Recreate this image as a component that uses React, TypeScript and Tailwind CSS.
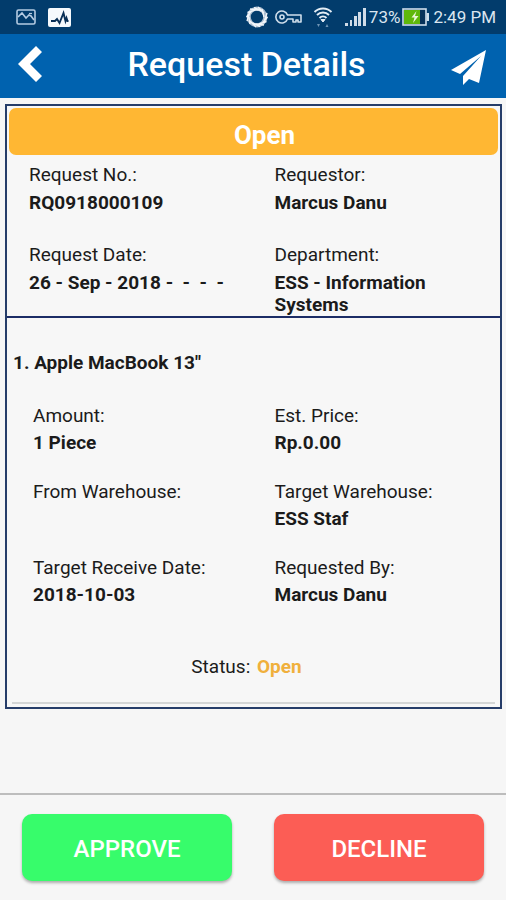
import React from "react";

type FieldProps = { label: string; value?: string; gap: string; pad: string };

function Field({ label, value, gap, pad }: FieldProps) {
  return (
    <div className={`flex flex-col ${gap} ${pad}`}>
      <dt>{label}</dt>
      <dd className="min-h-[22px] whitespace-pre-wrap font-bold">{value}</dd>
    </div>
  );
}

function StatusBar() {
  return (
    <div className="flex h-[34px] items-center justify-between bg-[#023c6c] pl-4 pr-[10px] text-[17px] leading-[22px] text-[#dbe6f0]">
      <div className="flex items-center gap-3">
        <svg width="20" height="16" viewBox="0 0 20 16" fill="none" stroke="#b5cbe2" aria-hidden="true">
          <rect x="1" y="1" width="18" height="14" rx="1.5" strokeWidth="1.6" />
          <path d="M2 8 6 4l4 5 3-3 2 1 3 4" strokeWidth="1.6" />
          <path d="M13 4.5h3" strokeWidth="1.2" />
        </svg>
        <svg width="23" height="19" viewBox="0 0 23 19" aria-hidden="true">
          <rect width="23" height="19" rx="2" fill="#f5f9fd" />
          <path d="M3 13h4l2-2 2.500 4 4-10 2 8 1-3 1 3h1" fill="none" stroke="#082f57" strokeWidth="1.9" />
        </svg>
      </div>
      <div className="flex items-center">
        <svg width="24" height="22" viewBox="0 0 24 22" fill="none" aria-hidden="true">
          <circle cx="12" cy="11" r="8.3" stroke="#a9bccf" strokeWidth="4.200" />
          <g stroke="#f2f6fa" strokeWidth="1.400">
            <path d="M9 1.500 16.500 5M13 1l6 6M5 3l8.500 1M2.500 6.500 10 4M1.500 11 6 5.500M2 15l2.500-7.500" />
            <path d="M15 20.500 7.500 17M11 21l-6-6M19 19l-8.500-1M21.500 15.500 14 18M22.500 11 18 16.500M22 7l-2.500 7.500M17 3l2 8M5 18l-1-7" />
          </g>
        </svg>
        <svg className="ml-[6px]" width="28" height="16" viewBox="0 0 28 16" fill="none" stroke="#cfdeeb" strokeWidth="1.6" aria-hidden="true">
          <path d="M12.500 6a6 6 0 1 0 0 4H18v3h3v-2h2v2h3V6z" strokeLinejoin="round" />
          <circle cx="7" cy="8" r="2" />
        </svg>
        <svg className="ml-[10px]" width="20" height="22" viewBox="0 0 20 22" fill="none" stroke="#e4edf5" strokeWidth="1.9" aria-hidden="true">
          <path d="M1.500 6a12 12 0 0 1 17 0M4 9a8.500 8.500 0 0 1 12 0M6.500 12a5 5 0 0 1 7 0" />
          <path d="m8 13.500 2 2.500 2-2.500z" fill="#e4edf5" strokeWidth="1" />
          <path d="m4 18 1.500 3L7 18zM12.500 21l1.500-3 1.500 3z" fill="#6f94b4" stroke="none" />
        </svg>
        <svg className="ml-3" width="22" height="20" viewBox="0 0 22 20" fill="#d0dce8" aria-hidden="true">
          <path d="M0 16h3v3H0zM5 13h2v6H5zM9 9h3v10H9zM13 5h3v14h-3zM18 1h3v18h-3z" />
        </svg>
        <span className="ml-[2px]">73%</span>
        <svg className="ml-[2px]" width="27" height="18" viewBox="0 0 27 18" aria-hidden="true">
          <rect x="1" y="1" width="23" height="16" fill="#073259" stroke="#cfdeeb" strokeWidth="1.600" />
          <path d="M24.500 5H27v8h-2.500z" fill="#cfdeeb" />
          <rect x="2" y="2" width="16" height="14" fill="#5fb80a" />
          <path d="m14.500 3-5 6.500h3L11 15l5.500-7H13z" fill="#e8f5d5" />
        </svg>
        <span className="ml-1">2:49 PM</span>
      </div>
    </div>
  );
}

export default function App() {
  return (
    <div className="flex min-h-screen flex-col bg-[#f6f6f6] font-[Roboto,sans-serif] text-[19px] leading-[22px] text-[#1b1b1b]">
      <StatusBar />
      <header className="flex h-16 items-center justify-between bg-[#0062af] pl-[17px] pr-5 text-white">
        <button type="button" aria-label="Back" className="pb-1">
          <svg width="26" height="38" viewBox="0 0 26 38" aria-hidden="true">
            <path d="M19 1 25 7 13 19 25 31 19 37 1 19z" fill="#fff" />
          </svg>
        </button>
        <h1 className="pb-1 text-[34px] font-medium leading-10">Request Details</h1>
        <button type="button" aria-label="Send" className="pt-1">
          <svg width="36" height="36" viewBox="0 0 36 36" fill="#fff" aria-hidden="true">
            <path d="M36 0 1 20l9 4L31 6 13 26v9l6-6 10 4z" />
          </svg>
        </button>
      </header>

      <main className="flex-1 pl-[5px] pr-1 pt-[6px]">
        <article className="border-2 border-[#263d69] bg-[#f7f7f7]">
          <section className="border-b-2 border-[#1c2d66]">
            <div className="px-[2px] pt-[2px]">
              <h2 className="rounded-[7px] bg-[#ffb733] pb-1 pl-[22px] pt-[11px] text-center text-[26px] font-bold leading-8 text-white">
                Open
              </h2>
            </div>
            <dl className="grid grid-cols-2 gap-y-[30px] pt-[9px]">
              <Field gap="gap-[6px]" pad="px-[22px]" label="Request No.:" value="RQ0918000109" />
              <Field gap="gap-[6px]" pad="px-[21px]" label="Requestor:" value="Marcus Danu" />
              <Field gap="gap-[6px]" pad="px-[22px]" label="Request Date:" value="26 - Sep - 2018 -  -  -  -" />
              <Field gap="gap-[6px]" pad="px-[21px]" label="Department:" value="ESS - Information Systems" />
            </dl>
          </section>

          <section className="pb-[3px] pt-[34px]">
            <h3 className="pl-[6px] font-bold">1. Apple MacBook 13"</h3>
            <dl className="grid grid-cols-2 gap-y-[27px] pt-[31px]">
              <Field gap="gap-[5px]" pad="pl-[26px]" label="Amount:" value="1 Piece" />
              <Field gap="gap-[5px]" pad="px-[21px]" label="Est. Price:" value="Rp.0.00" />
              <Field gap="gap-[5px]" pad="pl-[26px]" label="From Warehouse:" />
              <Field gap="gap-[5px]" pad="px-[21px]" label="Target Warehouse:" value="ESS Staf" />
              <Field gap="gap-[5px]" pad="pl-[26px]" label="Target Receive Date:" value="2018-10-03" />
              <Field gap="gap-[5px]" pad="px-[21px]" label="Requested By:" value="Marcus Danu" />
            </dl>
            <p className="mx-[5px] border-b-2 border-[#d4d6d6] pb-6 pr-[14px] pt-[50px] text-center">
              Status: <strong className="ml-[2px] font-bold text-[#f0b03c]">Open</strong>
            </p>
          </section>
        </article>
      </main>

      <footer className="grid grid-cols-2 gap-[42px] border-t-2 border-[#bdbdbd] px-[22px] py-[19px] text-[24px] font-medium leading-8 text-white">
        <button type="button" className="h-[67px] rounded-[10px] bg-[#37fc6b] pt-[2px] shadow-[0_2px_3px_rgba(0,0,0,0.3)]">
          APPROVE
        </button>
        <button type="button" className="h-[67px] rounded-[10px] bg-[#fc5d55] pt-[2px] shadow-[0_2px_3px_rgba(0,0,0,0.3)]">
          DECLINE
        </button>
      </footer>
    </div>
  );
}
